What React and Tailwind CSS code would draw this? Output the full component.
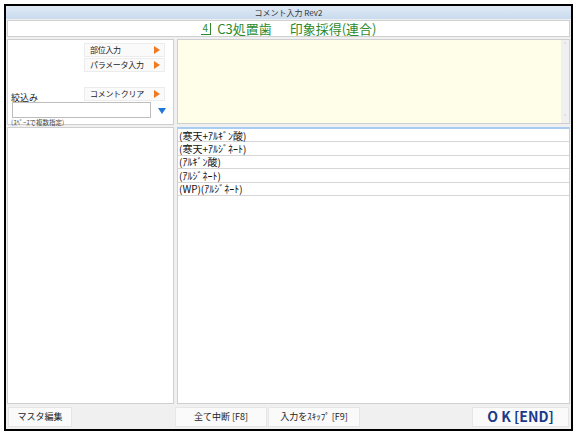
import React from 'react'

const FONT = { fontFamily: '"Noto Sans CJK JP", "Noto Sans", sans-serif' }

const ITEMS = ['(寒天+ｱﾙｷﾞﾝ酸)', '(寒天+ｱﾙｼﾞﾈｰﾄ)', '(ｱﾙｷﾞﾝ酸)', '(ｱﾙｼﾞﾈｰﾄ)', '(WP)(ｱﾙｼﾞﾈｰﾄ)']

function Tri() {
  return <span className="w-0 h-0 border-y-[4px] border-y-transparent border-l-[6px] border-l-[#f07a22]" />
}

function SideButton({ label }) {
  return (
    <div className="flex items-center justify-between w-[81px] h-[14px] bg-[#fafafa] border border-[#ececec] pl-[5px] pr-[4px] text-[8px] tracking-[-0.3px] text-[#222] leading-none">
      <span>{label}</span>
      <Tri />
    </div>
  )
}

export default function App() {
  return (
    <div className="w-[578px] h-[437px] bg-white pt-[4px] pl-[4px]" style={FONT}>
      <div className="w-[569px] h-[427px] border-2 border-black bg-[#f0f0f0] flex flex-col">
        {/* title bar */}
        <div className="h-[13px] bg-gradient-to-b from-[#dfe9f5] to-[#c9dbee] flex items-center justify-center text-[8px] text-[#333] leading-none">
          コメント入力 Rev2
        </div>
        {/* header */}
        <div className="mx-[1px] mt-[1px] h-[17px] bg-white border border-[#d0d0d0] flex items-center justify-center text-[13px] text-[#2c8a2c] leading-none">
          <span className="border-b border-r border-[#2c8a2c] text-[10px] px-[2px] pb-[1px] mr-[6px]">4</span>
          <span>C3処置歯</span>
          <span className="ml-[18px]">印象採得(連合)</span>
        </div>
        {/* body */}
        <div className="flex mt-[2px] px-[1px] gap-[3px] flex-1">
          {/* left column */}
          <div className="w-[167px] flex flex-col gap-[2px]">
            <div className="h-[86px] bg-white border border-[#cfcfcf] relative">
              <div className="absolute left-[76px] top-[3px] flex flex-col gap-[1px]">
                <SideButton label="部位入力" />
                <SideButton label="パラメータ入力" />
              </div>
              <div className="absolute left-[76px] top-[47px]">
                <SideButton label="コメントクリア" />
              </div>
              <div className="absolute left-[3px] top-[53px] text-[9px] leading-none text-[#222]">絞込み</div>
              <div className="absolute left-[4px] top-[62px] w-[139px] h-[16px] bg-white border border-[#bdbdbd]" />
              <span className="absolute left-[150px] top-[68px] w-0 h-0 border-x-[4px] border-x-transparent border-t-[6px] border-t-[#1e78d8]" />
              <div className="absolute left-[3px] top-[79px] text-[6.5px] leading-none text-[#444]">(ｽﾍﾟｰｽで複数指定)</div>
            </div>
            <div className="flex-1 bg-white border border-[#cfcfcf]" />
          </div>
          {/* right column */}
          <div className="flex-1 flex flex-col gap-[3px]">
            <div className="h-[85px] bg-[#fffee9] border border-[#cfcfcf] flex justify-end">
              <div className="w-[8px] bg-[#f0f0f0] flex flex-col justify-between items-center text-[7px] text-[#aaa] leading-none py-[2px]">
                <span>˄</span>
                <span>˅</span>
              </div>
            </div>
            <div className="flex-1 bg-white border border-[#cfcfcf] border-t-2 border-t-[#a9cdf0]">
              {ITEMS.map((t) => (
                <div key={t} className="h-[13.4px] flex items-center border-b border-[#d6d6d6] pl-[1px] text-[10px] leading-[11px] text-[#111]">
                  {t}
                </div>
              ))}
            </div>
          </div>
        </div>
        {/* footer */}
        <div className="h-[24px] flex items-center px-[2px] pb-[1px] mt-[1px] text-[9px] text-[#222]">
          <div className="w-[64px] h-[20px] bg-[#fafafa] border border-[#e6e6e6] flex items-center justify-center">マスタ編集</div>
          <div className="w-[92px] h-[20px] ml-[103px] bg-[#fafafa] border border-[#e6e6e6] flex items-center justify-center">全て中断 [F8]</div>
          <div className="w-[92px] h-[20px] ml-[1px] bg-[#fafafa] border border-[#e6e6e6] flex items-center justify-center">入力をｽｷｯﾌﾟ [F9]</div>
          <div className="w-[97px] h-[20px] ml-auto bg-[#fafafa] border border-[#e6e6e6] flex items-center justify-center text-[14px] font-bold text-[#1a3a8a]">
            O K [END]
          </div>
        </div>
      </div>
    </div>
  )
}
